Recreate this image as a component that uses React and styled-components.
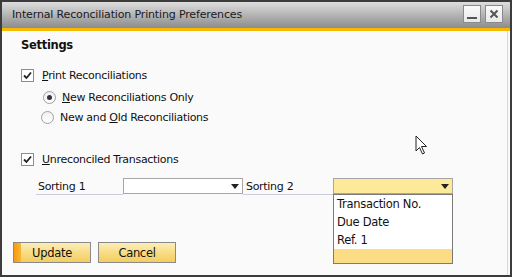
import React from 'react'
import styled, { createGlobalStyle } from 'styled-components'

const GlobalStyle = createGlobalStyle`
  html, body {
    margin: 0;
    padding: 0;
    background: #3a3a3a;
  }
  * {
    box-sizing: border-box;
  }
`

const Window = styled.div`
  width: 512px;
  height: 277px;
  border: 2px solid #3c3c3c;
  display: flex;
  flex-direction: column;
  font-family: "DejaVu Sans", "Liberation Sans", sans-serif;
  font-size: 11px;
  letter-spacing: -0.3px;
  color: #111;
  background: #fafafa;
`

const TitleBar = styled.div`
  height: 29px;
  flex-shrink: 0;
  display: flex;
  align-items: center;
  justify-content: space-between;
  padding: 0 7px 2px 10px;
  background: linear-gradient(#dedede, #b0b0b0 55%, #8c8c8c);
  border-bottom: 3px solid #f7b800;
`

const Title = styled.div`
  font-size: 11px;
  color: #1a1a1a;
  letter-spacing: -0.15px;
`

const TitleButtons = styled.div`
  display: flex;
  gap: 4px;
`

const TitleButton = styled.div`
  width: 18px;
  height: 18px;
  border: 1px solid #8a8a8a;
  background: linear-gradient(#fafafa, #e8e8e8);
  display: flex;
  align-items: center;
  justify-content: center;
`

const Body = styled.div`
  position: relative;
  flex: 1;
  display: flex;
  flex-direction: column;
  padding: 6px 0 0 19px;
  border-right: 1px solid #d6d6d6;
  margin-right: 2px;
`

const Heading = styled.div`
  font-weight: bold;
  font-size: 11.5px;
  line-height: 16px;
`

const OptionRow = styled.label`
  display: flex;
  align-items: center;
  gap: ${p => p.$gap || 8}px;
  height: 16px;
  margin-top: ${p => p.$top}px;
  margin-left: ${p => p.$indent || 0}px;
`

const Box = styled.span`
  width: 13px;
  height: 13px;
  border: 1px solid #8c8c8c;
  background: #fff;
  display: flex;
  align-items: center;
  justify-content: center;
`

const Radio = styled.span`
  width: 13px;
  height: 13px;
  border-radius: 50%;
  border: 1px solid #a0a0a0;
  background: linear-gradient(#f0f0f0, #fff);
  display: flex;
  align-items: center;
  justify-content: center;
  &::after {
    content: '';
    width: 5px;
    height: 5px;
    border-radius: 50%;
    background: ${p => (p.$on ? '#333' : 'transparent')};
  }
`

const U = styled.span`
  text-decoration: underline;
  text-underline-offset: 1px;
`

const SortRow = styled.div`
  display: flex;
  align-items: center;
  margin-top: 11px;
  margin-left: 15px;
  height: 16px;
`

const SortLabel = styled.div`
  width: ${p => p.$w}px;
  height: 16px;
  line-height: 15px;
  padding-left: ${p => p.$pad}px;
  border-bottom: 1px solid #c9ced8;
  margin-top: 2px;
`

const Combo = styled.div`
  position: relative;
  width: 120px;
  height: 16px;
  border: 1px solid #a6a6a6;
  background: ${p => (p.$active ? '#fce99a' : '#fff')};
  display: flex;
  align-items: center;
  justify-content: flex-end;
  padding-right: 3px;
`

const Arrow = styled.span`
  width: 0;
  height: 0;
  border-left: 4px solid transparent;
  border-right: 4px solid transparent;
  border-top: 5px solid #222;
`

const DropList = styled.div`
  position: absolute;
  top: 15px;
  left: -1px;
  width: 120px;
  border: 1px solid #7a7a7a;
  background: #fff;
  z-index: 2;
`

const DropItem = styled.div`
  line-height: 18px;
  padding-left: 3px;
  font-size: 11.5px;
  background: ${p => (p.$hl ? '#fcdd86' : '#fff')};
  height: ${p => (p.$hl ? 14 : 18)}px;
`

const Footer = styled.div`
  display: flex;
  gap: 7px;
  margin-top: 48px;
  margin-left: -8px;
`

const Button = styled.div`
  position: relative;
  width: 78px;
  height: 21px;
  border: 1px solid #8a8a8a;
  background: linear-gradient(#fdeeb8, #f8dc86 50%, #f4cd5e);
  display: flex;
  align-items: center;
  justify-content: center;
  font-size: 11.5px;
  overflow: hidden;
  &::before {
    content: '';
    display: ${p => (p.$focus ? 'block' : 'none')};
    position: absolute;
    left: 0;
    top: 0;
    bottom: 0;
    width: 7px;
    background: linear-gradient(90deg, #f59a10, #f7b733);
  }
`

const Cursor = styled.svg`
  position: absolute;
  left: 413px;
  top: 104px;
`

const Check = () => (
  <svg width="9" height="9" viewBox="0 0 9 9">
    <path d="M1 4.5 L3.5 7 L8 1.5" fill="none" stroke="#222" strokeWidth="1.8" />
  </svg>
)

const App = () => {
  return (
    <>
      <GlobalStyle />
      <Window>
        <TitleBar>
          <Title>Internal Reconciliation Printing Preferences</Title>
          <TitleButtons>
            <TitleButton>
              <svg width="12" height="12" viewBox="0 0 12 12">
                <rect x="1" y="9" width="10" height="2" fill="#555" />
              </svg>
            </TitleButton>
            <TitleButton>
              <svg width="10" height="10" viewBox="0 0 10 10">
                <path d="M1.5 1.5 L8.5 8.5 M8.5 1.5 L1.5 8.5" stroke="#555" strokeWidth="2" />
              </svg>
            </TitleButton>
          </TitleButtons>
        </TitleBar>
        <Body>
          <Heading>Settings</Heading>
          <OptionRow $top={14}>
            <Box><Check /></Box>
            <span><U>P</U>rint Reconciliations</span>
          </OptionRow>
          <OptionRow $top={6} $indent={22} $gap={6}>
            <Radio $on />
            <span><U>N</U>ew Reconciliations Only</span>
          </OptionRow>
          <OptionRow $top={4} $indent={20} $gap={6}>
            <Radio />
            <span>New and <U>O</U>ld Reconciliations</span>
          </OptionRow>
          <OptionRow $top={26}>
            <Box><Check /></Box>
            <span><U>U</U>nreconciled Transactions</span>
          </OptionRow>
          <SortRow>
            <SortLabel $w={87} $pad={2}>Sorting 1</SortLabel>
            <Combo><Arrow /></Combo>
            <SortLabel $w={90} $pad={3}>Sorting 2</SortLabel>
            <Combo $active>
              <Arrow />
              <DropList>
                <DropItem>Transaction No.</DropItem>
                <DropItem>Due Date</DropItem>
                <DropItem>Ref. 1</DropItem>
                <DropItem $hl />
              </DropList>
            </Combo>
          </SortRow>
          <Footer>
            <Button $focus>Update</Button>
            <Button>Cancel</Button>
          </Footer>
          <Cursor width="14" height="20" viewBox="0 0 14 20">
            <path d="M1 1 L1 16 L4.5 12.5 L7.5 19 L9.5 18 L6.5 11.5 L11.5 11.5 Z" fill="#fff" stroke="#222" strokeWidth="1" />
          </Cursor>
        </Body>
      </Window>
    </>
  )
}

export default App
